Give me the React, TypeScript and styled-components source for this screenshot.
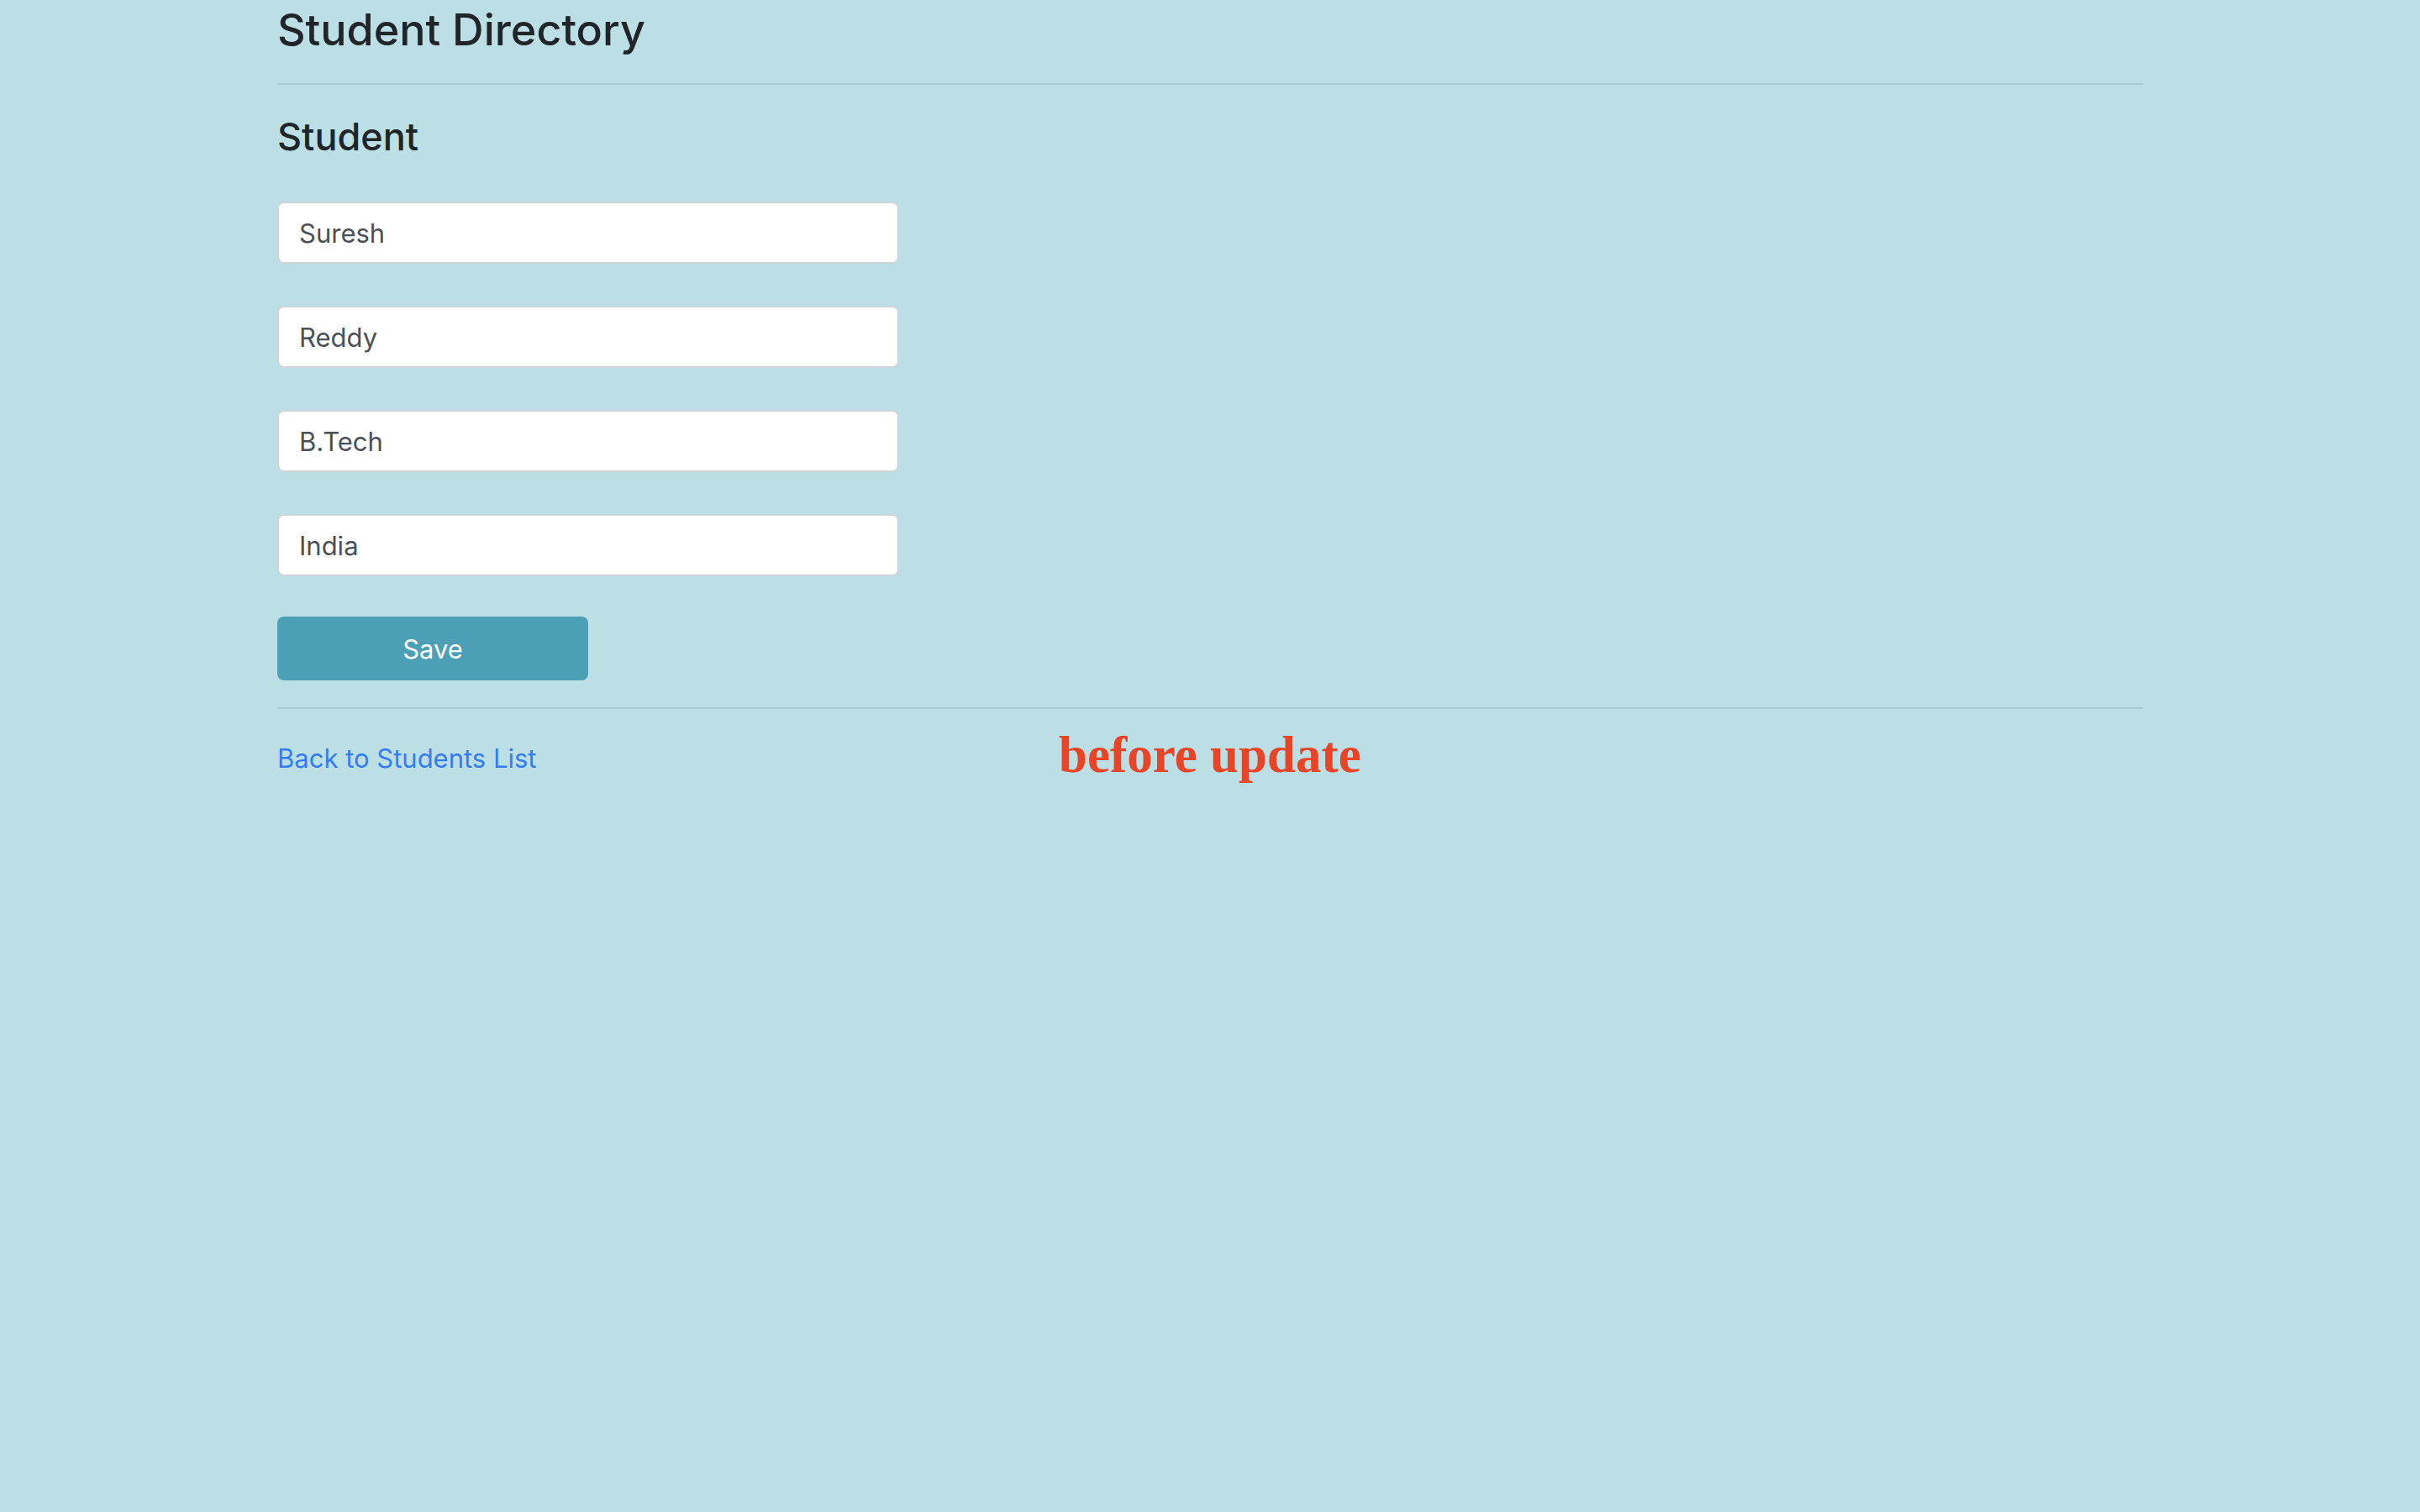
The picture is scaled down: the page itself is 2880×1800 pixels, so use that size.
import React from "react";
import styled, { createGlobalStyle } from "styled-components";

const GlobalStyle = createGlobalStyle`
  html, body {
    margin: 0;
    padding: 0;
    background: #bbdfe4;
    min-height: 100%;
  }
  body {
    font-family: Inter, "Liberation Sans", Arial, sans-serif;
    color: #212529;
    min-height: 1800px;
  }
  * { box-sizing: border-box; }
`;

const Page = styled.div`
  max-width: 2220px;
  margin: 0 auto;
  padding-top: 4px;
`;

const Title = styled.h1`
  margin: 0;
  font-family: "Inter Medium", Inter, "Liberation Sans", sans-serif;
  font-size: 52px;
  line-height: 64px;
  font-weight: 500;
  color: #212529;
`;

const Divider = styled.hr<{ $top: number }>`
  margin: ${(p) => p.$top}px 0 0;
  border: 0;
  border-top: 2px solid #a8c9ce;
  height: 0;
`;

const SectionTitle = styled.h2`
  margin: 34px 0 0;
  font-family: "Inter Medium", Inter, "Liberation Sans", sans-serif;
  font-size: 45px;
  line-height: 56px;
  font-weight: 500;
  color: #212529;
`;

const Form = styled.form`
  display: flex;
  flex-direction: column;
  gap: 50px;
  margin-top: 49px;
`;

const Field = styled.input`
  width: 740px;
  height: 74px;
  padding: 0 24px;
  border: 2px solid #ced4da;
  border-radius: 8px;
  background: #ffffff;
  color: #495057;
  font-family: inherit;
  font-size: 31px;
  outline: none;
`;

const SaveButton = styled.button`
  width: 370px;
  height: 76px;
  margin-top: -2px;
  border: 0;
  border-radius: 8px;
  background: #4ba0b5;
  color: #ffffff;
  font-family: inherit;
  font-size: 31px;
  cursor: pointer;
`;

const FooterRow = styled.div`
  display: grid;
  grid-template-columns: 930px auto;
  align-items: start;
  margin-top: 35px;
`;

const BackLink = styled.a`
  font-size: 31px;
  line-height: 48px;
  color: #347cf6;
  text-decoration: none;
  justify-self: start;
`;

const Annotation = styled.span`
  font-family: "Liberation Serif", "Times New Roman", serif;
  font-weight: 700;
  font-size: 61px;
  line-height: 40px;
  color: #e84428;
`;

const fields = ["Suresh", "Reddy", "B.Tech", "India"];

export default function App() {
  return (
    <>
      <GlobalStyle />
      <Page>
        <Title>Student Directory</Title>
        <Divider $top={31} />
        <SectionTitle>Student</SectionTitle>
        <Form onSubmit={(e) => e.preventDefault()}>
          {fields.map((v) => (
            <Field key={v} type="text" defaultValue={v} />
          ))}
          <SaveButton type="submit">Save</SaveButton>
        </Form>
        <Divider $top={32} />
        <FooterRow>
          <BackLink href="#">Back to Students List</BackLink>
          <Annotation>before update</Annotation>
        </FooterRow>
      </Page>
    </>
  );
}
